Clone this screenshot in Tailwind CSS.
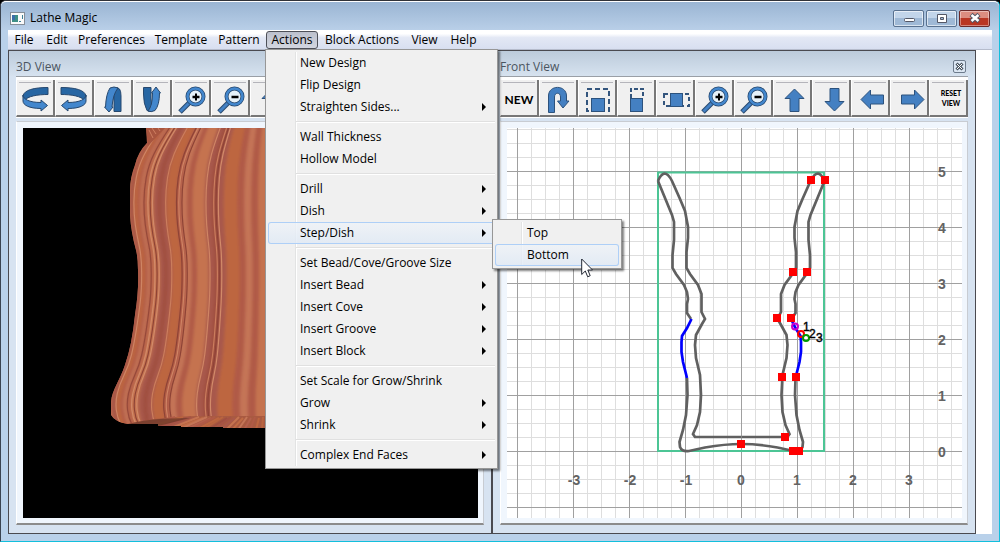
<!DOCTYPE html>
<html lang="en">
<head>
    <meta charset="UTF-8">
    <meta name="viewport" content="width=device-width, initial-scale=1.0">
    <title>Lathe Magic</title>
    <script src="https://cdn.jsdelivr.net/npm/@tailwindcss/browser@4"></script>
</head>
<body class="h-screen min-h-[500px] overflow-hidden bg-black font-['Open_Sans','Noto_Sans',sans-serif] text-[12px] leading-4 text-black">

    <!-- Icon library -->
    <svg class="hidden">
        <symbol id="i-rotate" viewBox="0 0 38 38">
            <path d="M32 7.500V14.500C22 14.500 11 16 8.500 21L7 16C8 10 18 7.500 32 7.500Z" fill="#2766a3" stroke="#27486e"/>
            <path d="M7 15C7 19 13 22.500 25 22.500V20L31.500 25.500L25 31V28.500C13 28.500 7 25 7 21Z" fill="#4387cd" stroke="#27486e"/>
        </symbol>
        <symbol id="i-tilt" viewBox="0 0 38 38">
            <path d="M21 8Q27 6 27 16V31.500H20V22Q19 14 21 8Z" fill="#2766a3" stroke="#27486e"/>
            <path d="M16 8Q20 6 24 8Q19 14 18 27H19L15 32L10.500 27H11.500Q12 14 16 8Z" fill="#4387cd" stroke="#27486e"/>
        </symbol>
        <symbol id="i-tilt-back" viewBox="0 0 38 38">
            <path d="M10.500 7.500H18V18Q18 26 20 30.500Q17 32.500 14 30.500Q10.500 24 10.500 14Z" fill="#2766a3" stroke="#27486e"/>
            <path d="M18.500 13L23 7L27.500 13H26.500Q26.500 25 22 30.500Q18 32.500 15 31Q19.500 26 19.500 13Z" fill="#4387cd" stroke="#27486e"/>
        </symbol>
        <symbol id="i-zoom" viewBox="0 0 38 38">
            <path d="M17.500 22.500L8 32" stroke="#27486e" stroke-width="5"/>
            <path d="M17.500 22.500L8.500 31.500" stroke="#4381c4" stroke-width="3"/>
            <circle cx="23.500" cy="16.500" r="8" fill="#e6f1f9" stroke="#27486e" stroke-width="4"/>
            <circle cx="23.500" cy="16.500" r="8" fill="none" stroke="#4387cd" stroke-width="2.500"/>
            <path d="M20.500 17H27.500" stroke="#000" stroke-width="2.500"/>
        </symbol>
        <symbol id="i-arrow" viewBox="0 0 38 38">
            <path d="M21.500 9L31 18.500H26V31.500H17V18.500H12Z" fill="#4480c2" stroke="#2c527d"/>
        </symbol>
        <symbol id="i-uturn" viewBox="0 0 38 38">
            <path d="M9.500 32.500V16C9.500 4.500 27.500 4.500 27.500 16V21H30L24 28L18.500 21H21.500V17C21.500 12 15.500 12 15.500 17V32.500Z" fill="#4480c2" stroke="#2c527d"/>
        </symbol>
    </svg>

    <div class="flex h-full flex-col rounded-t-[6px] border-t border-r border-b border-l border-t-[#303238] border-r-[#12bfdc] border-b-[#12bfdc] border-l-[#3a4350] bg-[#b9d1ea]">

        <!-- Title bar -->
        <header class="flex h-[29px] shrink-0 items-center rounded-t-[5px] border-t border-white bg-linear-to-b from-[#9ab5d3] to-[#b9cfe8] pr-[9px] pl-[9px]">
            <svg class="mt-1 h-[13px] w-[15px]" viewBox="0 0 15 13">
                <rect x=".5" y=".5" width="14" height="12" fill="#fafafa" stroke="#868e98"/>
                <rect x="2" y="3" width="6" height="7" fill="#3f8f86"/>
                <rect x="2" y="3" width="3" height="5" fill="#3c6fa8"/>
                <path d="M9 9.500H11M12.500 3V7" stroke="#3d7f96"/>
            </svg>
            <h1 class="mt-1 ml-[5px]">Lathe Magic</h1>
            <div class="mt-1 ml-auto flex gap-[2px]">
                <button aria-label="Minimize" class="flex h-[17px] w-[31px] items-center justify-center rounded-[2px] border border-[#59718f] bg-linear-to-b from-[#c2d5ea] from-50% to-[#9fb9d6] to-50% inset-ring inset-ring-white/60">
                    <svg class="h-4 w-4" viewBox="0 0 16 16"><rect x="3.500" y="8.500" width="10" height="3" rx="1" fill="#fff" stroke="#535766"/></svg>
                </button>
                <button aria-label="Maximize" class="flex h-[17px] w-[31px] items-center justify-center rounded-[2px] border border-[#59718f] bg-linear-to-b from-[#c2d5ea] from-50% to-[#9fb9d6] to-50% inset-ring inset-ring-white/60">
                    <svg class="h-4 w-4" viewBox="0 0 16 16"><path d="M3.500 4.500H12.500V12.500H3.500ZM6.500 7.500V9.500H9.500V7.500Z" fill="#fff" stroke="#535766" fill-rule="evenodd"/></svg>
                </button>
                <button aria-label="Close" class="flex h-[17px] w-[31px] items-center justify-center rounded-[2px] border border-[#6b2a2a] bg-linear-to-b from-[#dc8d80] from-50% to-[#b93623] to-50% inset-ring inset-ring-white/40">
                    <svg class="h-4 w-4" viewBox="0 0 16 16"><path d="M4 4.500L12 11.500M12 4.500L4 11.500" stroke="#535766" stroke-width="4.500"/><path d="M4.500 5L11.500 11M11.500 5L4.500 11" stroke="#fff" stroke-width="2.500"/></svg>
                </button>
            </div>
        </header>

        <div class="mx-[7px] mb-[7px] flex min-h-0 grow flex-col bg-white">

            <!-- Menu bar -->
            <nav class="flex h-5 shrink-0 border-b border-[#b6bccc] bg-linear-to-b from-white from-20% via-[#e3e8f5] via-40% to-[#d8dff0]">
                <button class="w-8">File</button>
                <button class="w-[34px]">Edit</button>
                <button class="w-[75px]">Preferences</button>
                <button class="w-16">Template</button>
                <button class="w-[52px]">Pattern</button>
                <div class="relative w-[54px]">
                    <button class="mt-px ml-px h-[18px] w-[52px] rounded-[3px] border border-[#4e5058] bg-linear-to-b from-[#bcc0cc] to-[#d3d6e0] leading-4">Actions</button>

                    <!-- Actions menu -->
                    <div class="absolute top-[19px] left-0 z-10 w-[233px] border border-[#979797] bg-[#f0f0f0] p-[2px] shadow-[2px_2px_2px_rgba(0,0,0,0.5)]">
                        <div class="absolute top-[2px] bottom-[2px] left-[29px] w-[2px] border-l border-[#e2e3e3] bg-white"></div>
                        <div class="relative flex flex-col">
                            <button class="h-[22px] pl-8 text-left">New Design</button>
                            <button class="h-[22px] pl-8 text-left">Flip Design</button>
                            <button class="flex h-[22px] items-center justify-between pr-[9px] pl-8">Straighten Sides...<svg class="h-2 w-1" viewBox="0 0 4 8"><path d="M0 0L4 4L0 8Z"/></svg></button>
                            <hr class="my-[3px] ml-7 h-[2px] border-t border-[#e0e0e0] bg-white">
                            <button class="h-[22px] pl-8 text-left">Wall Thickness</button>
                            <button class="h-[22px] pl-8 text-left">Hollow Model</button>
                            <hr class="my-[3px] ml-7 h-[2px] border-t border-[#e0e0e0] bg-white">
                            <button class="flex h-[22px] items-center justify-between pr-[9px] pl-8">Drill<svg class="h-2 w-1" viewBox="0 0 4 8"><path d="M0 0L4 4L0 8Z"/></svg></button>
                            <button class="flex h-[22px] items-center justify-between pr-[9px] pl-8">Dish<svg class="h-2 w-1" viewBox="0 0 4 8"><path d="M0 0L4 4L0 8Z"/></svg></button>
                            <div class="relative">
                                <button class="flex h-[22px] w-full items-center justify-between rounded-[3px] bg-linear-to-b from-[#eff3f8]/80 to-[#dfe9f5]/80 pr-[9px] pl-8 inset-ring inset-ring-[#aecff7]">Step/Dish<svg class="h-2 w-1" viewBox="0 0 4 8"><path d="M0 0L4 4L0 8Z"/></svg></button>

                                <!-- Step/Dish submenu -->
                                <div class="absolute -top-[3px] left-[224px] w-[130px] border border-[#979797] bg-[#f0f0f0] p-[2px] shadow-[2px_2px_2px_rgba(0,0,0,0.5)]">
                                    <div class="absolute top-[2px] bottom-[2px] left-7 w-[2px] border-l border-[#e2e3e3] bg-white"></div>
                                    <div class="relative flex flex-col">
                                        <button class="h-[22px] pl-8 text-left">Top</button>
                                        <button class="h-[22px] rounded-[3px] bg-linear-to-b from-[#eff3f8]/80 to-[#dfe9f5]/80 pl-8 text-left inset-ring inset-ring-[#aecff7]">Bottom</button>
                                    </div>
                                    <svg class="absolute top-[38px] left-[88px] h-5 w-3" viewBox="0 0 12 20"><path d="M.7 1V16.500L4.300 13L6.700 18.800L9.200 17.700L6.800 12H11.500Z" fill="#fff" stroke="#222733"/></svg>
                                </div>
                            </div>
                            <hr class="my-[3px] ml-7 h-[2px] border-t border-[#e0e0e0] bg-white">
                            <button class="h-[22px] pl-8 text-left">Set Bead/Cove/Groove Size</button>
                            <button class="flex h-[22px] items-center justify-between pr-[9px] pl-8">Insert Bead<svg class="h-2 w-1" viewBox="0 0 4 8"><path d="M0 0L4 4L0 8Z"/></svg></button>
                            <button class="flex h-[22px] items-center justify-between pr-[9px] pl-8">Insert Cove<svg class="h-2 w-1" viewBox="0 0 4 8"><path d="M0 0L4 4L0 8Z"/></svg></button>
                            <button class="flex h-[22px] items-center justify-between pr-[9px] pl-8">Insert Groove<svg class="h-2 w-1" viewBox="0 0 4 8"><path d="M0 0L4 4L0 8Z"/></svg></button>
                            <button class="flex h-[22px] items-center justify-between pr-[9px] pl-8">Insert Block<svg class="h-2 w-1" viewBox="0 0 4 8"><path d="M0 0L4 4L0 8Z"/></svg></button>
                            <hr class="my-[3px] ml-7 h-[2px] border-t border-[#e0e0e0] bg-white">
                            <button class="h-[22px] pl-8 text-left">Set Scale for Grow/Shrink</button>
                            <button class="flex h-[22px] items-center justify-between pr-[9px] pl-8">Grow<svg class="h-2 w-1" viewBox="0 0 4 8"><path d="M0 0L4 4L0 8Z"/></svg></button>
                            <button class="flex h-[22px] items-center justify-between pr-[9px] pl-8">Shrink<svg class="h-2 w-1" viewBox="0 0 4 8"><path d="M0 0L4 4L0 8Z"/></svg></button>
                            <hr class="my-[3px] ml-7 h-[2px] border-t border-[#e0e0e0] bg-white">
                            <button class="flex h-[22px] items-center justify-between pr-[9px] pl-8">Complex End Faces<svg class="h-2 w-1" viewBox="0 0 4 8"><path d="M0 0L4 4L0 8Z"/></svg></button>
                        </div>
                    </div>
                </div>
                <button class="w-[86px]">Block Actions</button>
                <button class="w-[39px]">View</button>
                <button class="w-[39px]">Help</button>
            </nav>

            <main class="mr-4 flex min-h-0 grow">

                <!-- 3D View -->
                <section class="flex min-w-0 flex-1 flex-col border border-[#4a4a50] bg-[#d7e3f1] pr-[7px] pb-[8px] pl-[7px]">
                    <div class="-mx-[7px] flex h-[25px] shrink-0 items-center bg-linear-to-b from-[#bccbdb] to-[#d6e2ef] px-[7px]">
                        <h2 class="mt-[6px] text-[#4b5560]">3D View</h2>
                    </div>
                    <div class="flex h-[42px] shrink-0 overflow-hidden border-t border-[#9a9fa6] bg-white pt-[3px] pb-px">
                        <button aria-label="Rotate left" class="relative w-[39px] shrink-0 border-r-2 border-b-2 border-l border-[#777] border-l-white bg-[#f0f0f0]"><span class="absolute inset-x-[2px] top-[2px] h-px bg-[#b4b4ba]"></span><svg class="-ml-px h-[38px] w-[38px]"><use href="#i-rotate"/></svg></button>
                        <button aria-label="Rotate right" class="relative w-[39px] shrink-0 border-r-2 border-b-2 border-l border-[#777] border-l-white bg-[#f0f0f0]"><span class="absolute inset-x-[2px] top-[2px] h-px bg-[#b4b4ba]"></span><svg class="-ml-px h-[38px] w-[38px] -scale-x-100"><use href="#i-rotate"/></svg></button>
                        <button aria-label="Tilt forward" class="relative w-[39px] shrink-0 border-r-2 border-b-2 border-l border-[#777] border-l-white bg-[#f0f0f0]"><span class="absolute inset-x-[2px] top-[2px] h-px bg-[#b4b4ba]"></span><svg class="-ml-px h-[38px] w-[38px]"><use href="#i-tilt"/></svg></button>
                        <button aria-label="Tilt back" class="relative w-[39px] shrink-0 border-r-2 border-b-2 border-l border-[#777] border-l-white bg-[#f0f0f0]"><span class="absolute inset-x-[2px] top-[2px] h-px bg-[#b4b4ba]"></span><svg class="-ml-px h-[38px] w-[38px]"><use href="#i-tilt-back"/></svg></button>
                        <button aria-label="Zoom in" class="relative w-[39px] shrink-0 border-r-2 border-b-2 border-l border-[#777] border-l-white bg-[#f0f0f0]"><span class="absolute inset-x-[2px] top-[2px] h-px bg-[#b4b4ba]"></span><svg class="-ml-px h-[38px] w-[38px]"><use href="#i-zoom"/><path d="M24 13.500V20.500" stroke="#000" stroke-width="2"/></svg></button>
                        <button aria-label="Zoom out" class="relative w-[39px] shrink-0 border-r-2 border-b-2 border-l border-[#777] border-l-white bg-[#f0f0f0]"><span class="absolute inset-x-[2px] top-[2px] h-px bg-[#b4b4ba]"></span><svg class="-ml-px h-[38px] w-[38px]"><use href="#i-zoom"/></svg></button>
                        <button aria-label="Move up" class="relative w-[39px] shrink-0 border-r-2 border-b-2 border-l border-[#777] border-l-white bg-[#f0f0f0]"><span class="absolute inset-x-[2px] top-[2px] h-px bg-[#b4b4ba]"></span><svg class="-ml-px h-[38px] w-[38px]"><use href="#i-arrow"/></svg></button>
                    </div>
                    <div class="mt-[3px] flex min-h-0 grow border-t border-r border-b-2 border-l border-[#c8ccd2] border-b-[#8c8c8c] border-l-white bg-[#f0f6fd] pt-[6px] pr-[5px] pb-[5px] pl-[6px]">
                        <svg class="h-full w-full bg-black" viewBox="23 128 455 390" preserveAspectRatio="xMinYMin slice">
                            <clipPath id="vase">
                                <path d="M146 128L147 143Q138 152 135 165Q130 178 130 190V215Q131 232 136 250Q138 258 138 270Q139 290 135 315Q132 345 125 365C120 380 112 390 111 402V415Q115 422 128 424L158 424V426H181V427H223V428H400V128Z"/>
                            </clipPath>
                            <filter id="soft" x="-10%" width="120%"><feGaussianBlur stdDeviation="1.6 0"/></filter>
                            <g clip-path="url(#vase)">
                                <rect x="100" y="128" width="320" height="300" fill="#b8634a"/>
                                <g id="grain" filter="url(#soft)"></g>
                                <g id="rings"></g>
                                <path d="M146 128H165L148 146Z" fill="#a8553f"/>
                                <path d="M152 128L156 134M149 130L153 138M158 128L160 131" stroke="#cf8163"/>
                                <path d="M126 425Q150 417 200 416H400V430H126Z" fill="#a95a41"/>
                                <g id="base" stroke-width="1"></g>
                                <path d="M126 425Q145 418 190 418L150 428Z" fill="#6f3a2a" opacity=".8"/>
                            </g>
                        </svg>
                    </div>
                </section>

                <!-- Front View -->
                <section class="flex min-w-0 flex-1 flex-col border border-[#4a4a50] bg-[#d7e3f1] pr-[7px] pb-[8px] pl-[7px]">
                    <div class="-mx-[7px] flex h-[25px] shrink-0 items-center justify-between bg-linear-to-b from-[#bccbdb] to-[#d6e2ef] pr-[9px] pl-[7px]">
                        <h2 class="mt-[6px] text-[#4b5560]">Front View</h2>
                        <button aria-label="Close front view" class="mt-[6px] h-[13px] w-[13px] rounded-[2px] border border-[#6d7b8c] bg-[#dbe6f2]">
                            <svg viewBox="0 0 11 11"><path d="M2.500 2.500L8.500 8.500M8.500 2.500L2.500 8.500" stroke="#4a5560" stroke-width="3"/><path d="M3 3L8 8M8 3L3 8" stroke="#fff"/></svg>
                        </button>
                    </div>
                    <div class="flex h-[42px] shrink-0 overflow-hidden border-t border-[#9a9fa6] bg-white pt-[3px] pb-px">
                        <button class="relative w-[39px] shrink-0 border-r-2 border-b-2 border-l border-[#777] border-l-white bg-[#f0f0f0] pt-[5px] font-[Lato] text-[12px] font-bold"><span class="absolute inset-x-[2px] top-[2px] h-px bg-[#b4b4ba]"></span>NEW</button>
                        <button aria-label="Flip" class="relative w-[39px] shrink-0 border-r-2 border-b-2 border-l border-[#777] border-l-white bg-[#f0f0f0]"><span class="absolute inset-x-[2px] top-[2px] h-px bg-[#b4b4ba]"></span><svg class="-ml-px h-[38px] w-[38px]"><use href="#i-uturn"/></svg></button>
                        <button aria-label="Scale" class="relative w-[39px] shrink-0 border-r-2 border-b-2 border-l border-[#777] border-l-white bg-[#f0f0f0]"><span class="absolute inset-x-[2px] top-[2px] h-px bg-[#b4b4ba]"></span><svg class="-ml-px h-[38px] w-[38px]"><rect x="9" y="9" width="22" height="22" fill="none" stroke="#33557d" stroke-width="2" stroke-dasharray="5 3"/><rect x="13.500" y="18.500" width="13" height="13" fill="#4480c2" stroke="#2c527d"/></svg></button>
                        <button aria-label="Scale height" class="relative w-[39px] shrink-0 border-r-2 border-b-2 border-l border-[#777] border-l-white bg-[#f0f0f0]"><span class="absolute inset-x-[2px] top-[2px] h-px bg-[#b4b4ba]"></span><svg class="-ml-px h-[38px] w-[38px]"><path d="M14 18V9H26V18" fill="none" stroke="#33557d" stroke-width="2" stroke-dasharray="4 2"/><rect x="13.500" y="18.500" width="12" height="13" fill="#4480c2" stroke="#2c527d"/></svg></button>
                        <button aria-label="Scale width" class="relative w-[39px] shrink-0 border-r-2 border-b-2 border-l border-[#777] border-l-white bg-[#f0f0f0]"><span class="absolute inset-x-[2px] top-[2px] h-px bg-[#b4b4ba]"></span><svg class="-ml-px h-[38px] w-[38px]"><rect x="8" y="14" width="25" height="12" fill="none" stroke="#33557d" stroke-width="2" stroke-dasharray="4 3"/><rect x="14.500" y="13.500" width="12" height="13" fill="#4480c2" stroke="#2c527d"/></svg></button>
                        <button aria-label="Zoom in" class="relative w-[39px] shrink-0 border-r-2 border-b-2 border-l border-[#777] border-l-white bg-[#f0f0f0]"><span class="absolute inset-x-[2px] top-[2px] h-px bg-[#b4b4ba]"></span><svg class="-ml-px h-[38px] w-[38px]"><use href="#i-zoom"/><path d="M24 13.500V20.500" stroke="#000" stroke-width="2"/></svg></button>
                        <button aria-label="Zoom out" class="relative w-[39px] shrink-0 border-r-2 border-b-2 border-l border-[#777] border-l-white bg-[#f0f0f0]"><span class="absolute inset-x-[2px] top-[2px] h-px bg-[#b4b4ba]"></span><svg class="-ml-px h-[38px] w-[38px]"><use href="#i-zoom"/></svg></button>
                        <button aria-label="Move up" class="relative w-[39px] shrink-0 border-r-2 border-b-2 border-l border-[#777] border-l-white bg-[#f0f0f0]"><span class="absolute inset-x-[2px] top-[2px] h-px bg-[#b4b4ba]"></span><svg class="-ml-px h-[38px] w-[38px]"><use href="#i-arrow"/></svg></button>
                        <button aria-label="Move down" class="relative w-[39px] shrink-0 border-r-2 border-b-2 border-l border-[#777] border-l-white bg-[#f0f0f0]"><span class="absolute inset-x-[2px] top-[2px] h-px bg-[#b4b4ba]"></span><svg class="-ml-px h-[38px] w-[38px]"><use href="#i-arrow" transform="matrix(1 0 0 -1 1 40)"/></svg></button>
                        <button aria-label="Move left" class="relative w-[39px] shrink-0 border-r-2 border-b-2 border-l border-[#777] border-l-white bg-[#f0f0f0]"><span class="absolute inset-x-[2px] top-[2px] h-px bg-[#b4b4ba]"></span><svg class="-ml-px h-[38px] w-[38px]"><use href="#i-arrow" transform="matrix(0 -1 1 0 1 41)"/></svg></button>
                        <button aria-label="Move right" class="relative w-[39px] shrink-0 border-r-2 border-b-2 border-l border-[#777] border-l-white bg-[#f0f0f0]"><span class="absolute inset-x-[2px] top-[2px] h-px bg-[#b4b4ba]"></span><svg class="-ml-px h-[38px] w-[38px]"><use href="#i-arrow" transform="matrix(0 1 -1 0 43 -2)"/></svg></button>
                        <button class="relative w-[39px] shrink-0 border-r-2 border-b-2 border-l border-[#777] border-l-white bg-[#f0f0f0] pl-[6px] font-[Lato] text-[7px] leading-[10px] font-black"><span class="absolute inset-x-[2px] top-[2px] h-px bg-[#b4b4ba]"></span>RESET<br>VIEW</button>
                    </div>
                    <div class="mt-[3px] flex min-h-0 grow border-t border-r border-b-2 border-l border-[#c8ccd2] border-b-[#8c8c8c] border-l-white bg-[#f0f6fd] pt-[6px] pr-[5px] pb-[5px] pl-[6px]">
                        <svg class="h-full w-full bg-white" viewBox="507 128 455 390" preserveAspectRatio="xMinYMin slice">
                            <defs>
                                <pattern id="minor" x="741" y="171" width="14" height="14" patternUnits="userSpaceOnUse">
                                    <path d="M.5 0V14M0 .5H14" stroke="#dedede"/>
                                </pattern>
                                <pattern id="major" x="741" y="171" width="56" height="56" patternUnits="userSpaceOnUse">
                                    <path d="M.5 0V56M0 .5H56" stroke="#a0a0a0"/>
                                </pattern>
                                <g id="wall">
                                    <path d="M658 181C660 176 662 174 664.500 173.500C667 173.500 670 177 672 181L680 199L685 211L688 227V238L686.500 252V268L690 274L698 285L701.500 294V312L705 319L702 324L696 335L695 345L696 358L700 375L701 395L700 412L697 425L693 434L695 437H741"/>
                                    <path d="M658 181L665 198L672 215L674 222V240L672.500 255V268L676 274L684 285L687 292L688 299L687 304V313L691 319"/>
                                    <path d="M687 378L687.500 395L686 415L683 430L679.500 442L680 447Q682 452 689 451L705 447.500Q725 444 741 444"/>
                                </g>
                            </defs>
                            <rect x="507" y="128" width="1500" height="1500" fill="url(#minor)"/>
                            <rect x="507" y="128" width="1500" height="1500" fill="url(#major)"/>
                            <rect x="658" y="172.500" width="166" height="278.500" fill="none" stroke="#4cc595" stroke-width="2"/>
                            <g fill="none" stroke="#606060" stroke-width="2.700">
                                <use href="#wall"/>
                                <use href="#wall" transform="matrix(-1 0 0 1 1482.500 0)"/>
                            </g>
                            <g fill="none" stroke="#0000ff" stroke-width="2.700">
                                <path id="cove" d="M691.500 319L687 328L682 336L681.500 342V352L683 362L687 378"/>
                                <use href="#cove" transform="matrix(-1 0 0 1 1482.500 0)"/>
                            </g>
                            <!-- Control points -->
                            <path fill="#ff0000" d="M807 176h8v8h-8zM821 176h8v8h-8zM789 268h8v8h-8zM803 268h8v8h-8zM773 314h8v8h-8zM787 314h8v8h-8zM778 373h8v8h-8zM792 373h8v8h-8zM781 433h8v8h-8zM737 440h8v8h-8zM789 447h14v8h-14z"/>
                            <g fill="none" stroke-width="2">
                                <circle cx="795" cy="326.500" r="3" stroke="#cc00cc"/>
                                <circle cx="801" cy="334" r="3" stroke="#ff0000"/>
                                <circle cx="806" cy="338" r="3" stroke="#009900"/>
                            </g>
                            <g class="font-['Liberation_Sans'] text-[12px]" fill="#000" stroke="#000" stroke-width=".4">
                                <text x="803" y="331">1</text>
                                <text x="809" y="338">2</text>
                                <text x="816" y="342">3</text>
                            </g>
                            <g class="font-['Liberation_Sans'] text-[14px] font-bold" fill="#636363" text-anchor="middle">
                                <text x="574" y="485">-3</text>
                                <text x="630" y="485">-2</text>
                                <text x="686" y="485">-1</text>
                                <text x="741" y="485">0</text>
                                <text x="797" y="485">1</text>
                                <text x="853" y="485">2</text>
                                <text x="909" y="485">3</text>
                                <text x="942" y="177">5</text>
                                <text x="942" y="233">4</text>
                                <text x="942" y="289">3</text>
                                <text x="942" y="345">2</text>
                                <text x="942" y="401">1</text>
                                <text x="942" y="457">0</text>
                            </g>
                        </svg>
                    </div>
                </section>
            </main>
        </div>
    </div>

    <script>
        // Left edge of the turned blank, as [y, x]
        const profile = [[128, 158], [143, 147], [165, 135], [190, 130], [215, 130], [235, 133], [257, 138], [290, 138], [315, 135], [345, 130], [365, 125], [385, 115], [402, 111], [418, 113], [430, 120]];
        const tones = ['#b05a46', '#c06b45', '#a65345', '#bd6640', '#c47557', '#a8584b', '#b9643f', '#b4604d', '#c57350', '#a04f41'];
        const axis = 285;
        const svgNS = 'http://www.w3.org/2000/svg';

        // The edge squeezed towards the axis by factor s
        function grainPath(s) {
            return profile.map(([y, x]) => [axis - (axis - x) * s, y]);
        }

        // Smooth curve through the midpoints
        function smooth(points) {
            let d = `M${points[0]}`;
            for (let i = 1; i < points.length - 1; i++) {
                const mid = [(points[i][0] + points[i + 1][0]) / 2, (points[i][1] + points[i + 1][1]) / 2];
                d += `Q${points[i]} ${mid}`;
            }
            return d + `L${points[points.length - 1]}`;
        }

        function addPath(parent, d, color, width) {
            const path = document.createElementNS(svgNS, 'path');
            path.setAttribute('d', d);
            path.setAttribute('fill', 'none');
            path.setAttribute('stroke', color);
            path.setAttribute('stroke-width', width);
            parent.appendChild(path);
        }

        const grain = document.getElementById('grain');
        for (let i = 0; i < 34; i++) {
            const angle = (i / 34) * Math.PI * 0.5;
            addPath(grain, smooth(grainPath(Math.cos(angle))), tones[(i * 7 + (i * i) % 5) % tones.length], 3 + 8 * Math.sin(angle));
        }

        // Thin growth rings: [distance from axis, colour]
        const rings = document.getElementById('rings');
        [[0.975, '#cf8464'], [0.91, '#96493a'], [0.885, '#d28a69'], [0.87, '#8e4336'], [0.855, '#d28a69'], [0.77, '#cb7d5d'], [0.7, '#8e4336'], [0.685, '#cf8464'], [0.665, '#8e4336'], [0.51, '#cf8464'], [0.46, '#cb7d5d'], [0.445, '#8e4336'], [0.43, '#d28a69']].forEach(([s, color]) => {
            addPath(rings, smooth(grainPath(s)), color, 1.2);
        });

        const base = document.getElementById('base');
        for (let i = 0; i < 26; i++) {
            addPath(base, `M${175 + i * 4} ${417 + (i % 2)}L${130 + i * 6} 430`, tones[(i * 3) % tones.length], 2);
        }
    </script>
</body>
</html>
